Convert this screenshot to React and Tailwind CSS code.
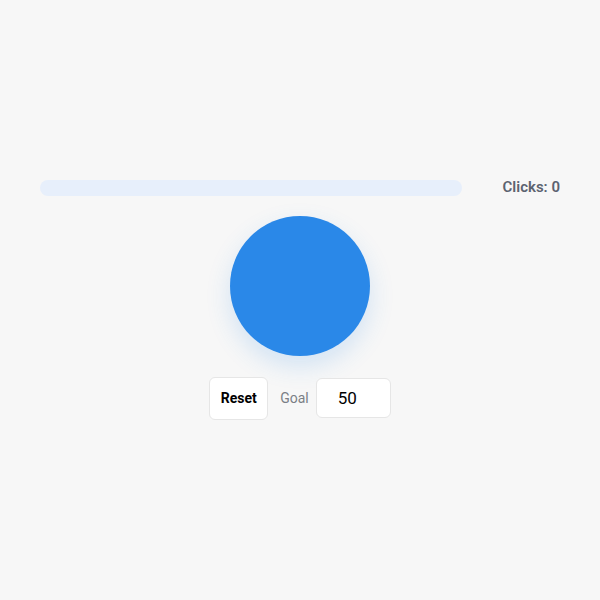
import React, { useState } from "react";

const App = () => {
  const [clicks, setClicks] = useState(0);
  const [goal, setGoal] = useState(50);

  const pct = Math.min(100, (clicks / (goal || 1)) * 100);

  return (
    <div
      className="flex h-screen w-full items-center justify-center bg-[#f7f7f7] px-10 pb-1"
      style={{ fontFamily: "Roboto, 'Liberation Sans', sans-serif" }}
    >
      <div className="flex w-full flex-col items-center">
        {/* progress */}
        <div className="flex w-full items-center gap-[41px]">
          <div className="h-4 flex-1 overflow-hidden rounded-full bg-[#e7effb]">
            <div className="h-full bg-[#2a88e8]" style={{ width: `${pct}%` }} />
          </div>
          <div className="text-[15px] font-semibold text-[#5c6370]">Clicks: {clicks}</div>
        </div>

        {/* big button */}
        <button
          onClick={() => setClicks(clicks + 1)}
          className="mt-[17px] h-[140px] w-[140px] rounded-full bg-[#2a88e8] shadow-[0_10px_24px_rgba(42,136,232,0.18)]"
        />

        {/* controls */}
        <div className="mt-[21px] flex items-center">
          <button
            onClick={() => setClicks(0)}
            className="h-[43px] w-[59px] rounded-md border border-[#e6e6e6] bg-white text-[14px] font-bold text-black"
          >
            Reset
          </button>
          <span className="ml-[12px] mr-[7px] text-[14px] text-[#7b7f86]">Goal</span>
          <input
            value={goal}
            onChange={(e) => setGoal(Number(e.target.value) || 0)}
            className="h-10 w-[75px] rounded-md border border-[#e6e6e6] bg-white pl-[21px] text-[17px] text-black outline-none"
          />
        </div>
      </div>
    </div>
  );
};

export default App;
